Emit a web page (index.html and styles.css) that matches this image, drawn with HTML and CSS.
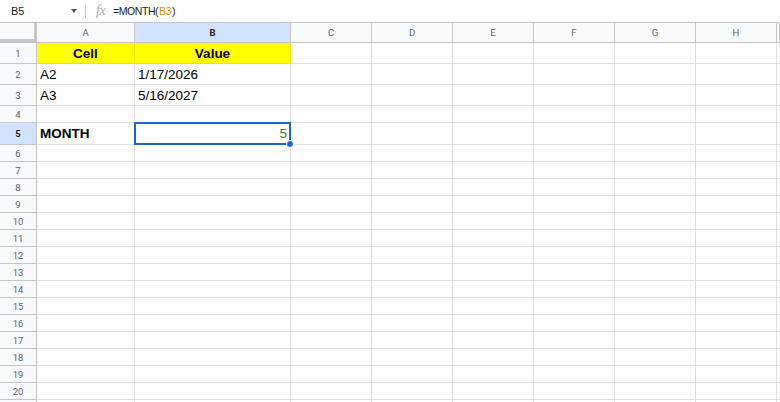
FILE: index.html
```html
<!DOCTYPE html>
<html>
<head>
    <title>MONTH</title>
    <meta charset="utf-8">
    <link rel="stylesheet" href="styles.css">
</head>
<body>
<div class="formula-bar">
    <div class="name-box">
        <span>B5</span>
        <span class="caret"></span>
    </div>
    <div class="sep"></div>
    <span class="fx">fx</span>
    <div class="formula">=MONTH(<span class="ref">B3</span>)</div>
</div>

<div class="sheet" id="sheet">
    <div class="row head">
        <div class="corner"></div>
        <div class="col-head">A</div>
        <div class="col-head sel">B</div>
        <div class="col-head">C</div>
        <div class="col-head">D</div>
        <div class="col-head">E</div>
        <div class="col-head">F</div>
        <div class="col-head">G</div>
        <div class="col-head">H</div>
        <div class="col-head"></div>
    </div>
    <div class="row tall">
        <div class="row-head">1</div>
        <div class="cell yellow bold center">Cell</div>
        <div class="cell yellow bold center">Value</div>
        <div class="cell"></div><div class="cell"></div><div class="cell"></div>
        <div class="cell"></div><div class="cell"></div><div class="cell"></div><div class="cell"></div>
    </div>
    <div class="row tall">
        <div class="row-head">2</div>
        <div class="cell">A2</div>
        <div class="cell">1/17/2026</div>
        <div class="cell"></div><div class="cell"></div><div class="cell"></div>
        <div class="cell"></div><div class="cell"></div><div class="cell"></div><div class="cell"></div>
    </div>
    <div class="row tall">
        <div class="row-head">3</div>
        <div class="cell">A3</div>
        <div class="cell">5/16/2027</div>
        <div class="cell"></div><div class="cell"></div><div class="cell"></div>
        <div class="cell"></div><div class="cell"></div><div class="cell"></div><div class="cell"></div>
    </div>
    <div class="row">
        <div class="row-head">4</div>
        <div class="cell"></div><div class="cell"></div>
        <div class="cell"></div><div class="cell"></div><div class="cell"></div>
        <div class="cell"></div><div class="cell"></div><div class="cell"></div><div class="cell"></div>
    </div>
    <div class="row tall r5">
        <div class="row-head sel">5</div>
        <div class="cell bold">MONTH</div>
        <div class="cell number active">5</div>
        <div class="cell"></div><div class="cell"></div><div class="cell"></div>
        <div class="cell"></div><div class="cell"></div><div class="cell"></div><div class="cell"></div>
    </div>
</div>

<script>
// lignes vides 6 a 20, plus le haut de la ligne 21
const sheet = document.getElementById("sheet");
for (let i = 6; i <= 21; i++) {
    const row = document.createElement("div");
    row.classList.add("row");
    const head = document.createElement("div");
    head.classList.add("row-head");
    if (i <= 20) {
        head.textContent = i;
    }
    row.appendChild(head);
    for (let c = 0; c < 9; c++) {
        const cell = document.createElement("div");
        cell.classList.add("cell");
        row.appendChild(cell);
    }
    sheet.appendChild(row);
}
</script>
</body>
</html>
```

FILE: styles.css
```css
body {
    margin: 0;
    background-color: #ffffff;
    font-family: "Liberation Sans", Arial, sans-serif;
    color: #000000;
    overflow: hidden;
}
.formula-bar {
    display: flex;
    align-items: center;
    height: 22px;
    border-bottom: 1px solid #c4c7c5;
    font-size: 11px;
    color: #222222;
}
.name-box {
    display: flex;
    align-items: center;
    justify-content: space-between;
    width: 66px;
    padding-left: 11px;
    padding-right: 8px;
}
.caret {
    width: 0;
    height: 0;
    border-left: 3.5px solid transparent;
    border-right: 3.5px solid transparent;
    border-top: 4px solid #555555;
}
.sep {
    width: 1px;
    height: 13px;
    background-color: #c7c7c7;
}
.fx {
    margin-left: 10px;
    font-family: "Liberation Serif", serif;
    font-style: italic;
    font-size: 14px;
    color: #a8a8a8;
    letter-spacing: -0.5px;
}
.formula {
    margin-left: 8px;
    font-size: 10.5px;
    letter-spacing: -0.45px;
    color: #222222;
}
.formula .ref {
    color: #e8860f;
    margin: 0 1px;
}
.row {
    display: grid;
    grid-template-columns: 37px 98px 156px repeat(6, 81px) 1fr;
    height: 17px;
}
.row.head {
    height: 20px;
}
.row.tall {
    height: 21px;
}
.row.r5 {
    height: 22px;
}
.corner, .col-head, .row-head {
    box-sizing: border-box;
    background-color: #f8f9fa;
    border-right: 1px solid #c4c7c5;
    border-bottom: 1px solid #c4c7c5;
    font-family: Roboto, "Liberation Sans", sans-serif;
    font-size: 9.5px;
    color: #5f6368;
    display: flex;
    align-items: center;
    justify-content: center;
}
.corner {
    box-shadow: inset -2px -3px 0 #c4c7c5;
}
.col-head.sel, .row-head.sel {
    background-color: #d3e3fd;
    color: #1f1f1f;
    font-weight: bold;
}
.cell {
    box-sizing: border-box;
    border-right: 1px solid #e1e1e1;
    border-bottom: 1px solid #e1e1e1;
    padding: 0 3px;
    font-size: 13.5px;
    display: flex;
    align-items: center;
    white-space: nowrap;
    overflow: visible;
}
.cell.yellow {
    background-color: #ffff00;
    border-color: rgba(120, 120, 0, 0.18);
}
.cell.bold {
    font-weight: bold;
}
.cell.center {
    justify-content: center;
}
.cell.number {
    justify-content: flex-end;
    color: #3b7a3b;
}
.cell.active {
    position: relative;
}
.cell.active::after {
    content: "";
    position: absolute;
    top: -1px;
    left: -1px;
    right: -1px;
    bottom: -1px;
    border: 2px solid #1b66c9;
}
.cell.active::before {
    content: "";
    position: absolute;
    right: -4px;
    bottom: -4px;
    width: 6px;
    height: 6px;
    border-radius: 50%;
    background-color: #1b66c9;
    border: 1px solid #ffffff;
    z-index: 2;
}
```
